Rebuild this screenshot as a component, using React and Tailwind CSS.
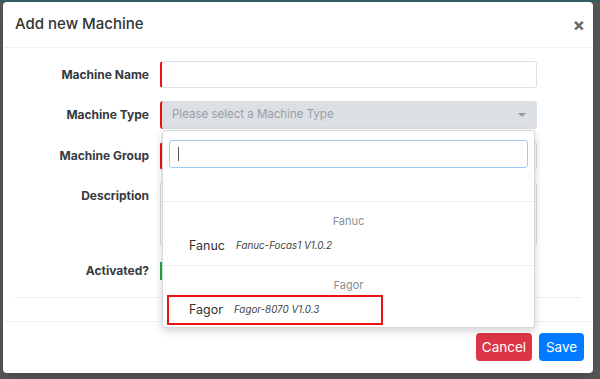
const labelCls =
  "w-[134px] shrink-0 text-right text-[12px] font-bold text-[#343a40] leading-none";

function Row({ label, children, className = "", labelTop = false }) {
  return (
    <div className={`flex ${labelTop ? "items-start" : "items-center"} ${className}`}>
      <div className={`${labelCls} ${labelTop ? "pt-[8px]" : ""}`}>{label}</div>
      <div className="ml-[11px] w-[377px] relative">{children}</div>
    </div>
  );
}

function Option({ name, version, selected = false }) {
  return (
    <div
      className={`mx-[4px] h-[30px] w-[216px] flex items-center pl-[20px] border-[2.5px] ${
        selected ? "border-[#ee1111]" : "border-transparent"
      }`}
    >
      <span className="text-[12.5px] text-[#333]">{name}</span>
      <span className="ml-[11px] text-[9.8px] italic text-[#444]">{version}</span>
    </div>
  );
}

export default function App() {
  return (
    <div
      className="w-[600px] h-[379px] bg-[#555555] overflow-hidden"
      style={{ fontFamily: "Inter, 'Liberation Sans', sans-serif" }}
    >
      <div className="h-[2px] bg-[#2f5d62]" />
      <div className="ml-[3px] w-[590px] h-[371px] bg-white rounded-[4px] flex flex-col shadow-lg">
        {/* header */}
        <div className="h-[46px] shrink-0 border-b border-[#eef0f2] flex items-center justify-between pl-[12px] pr-[8px]">
          <h1 className="text-[15px] font-medium text-[#333]">Add new Machine</h1>
          <span className="text-[18px] font-bold leading-none text-[#666]">×</span>
        </div>

        {/* body */}
        <div className="px-[12px] pt-[13px] h-[274px] shrink-0 border-b border-[#eef0f2]">
          <Row label="Machine Name" className="mb-[13px]">
            <div className="h-[27px] rounded-[3px] border border-[#dcdfe3] border-l-[2px] border-l-[#ee1111] bg-white" />
          </Row>

          <Row label="Machine Type" className="mb-[13px] relative z-10">
            <div className="h-[28px] rounded-[3px] border-l-[2px] border-l-[#ee1111] bg-[#dcdfe4] flex items-center justify-between pl-[10px] pr-[11px]">
              <span className="text-[11.5px] text-[#9aa0a6]">Please select a Machine Type</span>
              <span className="w-0 h-0 border-l-[4px] border-r-[4px] border-t-[4px] border-l-transparent border-r-transparent border-t-[#999]" />
            </div>

            {/* dropdown */}
            <div className="absolute left-[2px] top-[29px] w-[373px] bg-white border border-[#d5d8dc] rounded-[3px] shadow-[0_3px_8px_rgba(0,0,0,0.18)]">
              <div className="pt-[9px] px-[6px]">
                <div className="h-[28px] rounded-[3px] border border-[#9fcbf7] flex items-center pl-[8px]">
                  <span className="w-[1px] h-[14px] bg-[#555]" />
                </div>
              </div>
              <div className="h-[33px]" />
              <div className="border-t border-[#eceef0]">
                <div className="h-[29px] pt-[12px] leading-[14px] text-center text-[11px] text-[#8a8f95]">
                  Fanuc
                </div>
                <Option name="Fanuc" version="Fanuc-Focas1 V1.0.2" />
                <div className="h-[4px]" />
              </div>
              <div className="border-t border-[#eceef0]">
                <div className="h-[29px] pt-[12px] leading-[14px] text-center text-[11px] text-[#8a8f95]">
                  Fagor
                </div>
                <Option name="Fagor" version="Fagor-8070 V1.0.3" selected />
                <div className="h-[2px]" />
              </div>
            </div>
          </Row>

          <Row label="Machine Group" className="mb-[12px]">
            <div className="h-[28px] rounded-[3px] border border-[#dcdfe3] border-l-[2px] border-l-[#ee1111] bg-white" />
          </Row>

          <Row label="Description" labelTop className="mb-[16px]">
            <div className="h-[64px] rounded-[3px] border border-[#dcdfe3] bg-white" />
          </Row>

          <Row label="Activated?">
            <div className="h-[18px] w-[2px] bg-[#28a745]" />
          </Row>

          <div className="mt-[17px] border-t border-[#eceef0]" />
        </div>

        {/* footer */}
        <div className="flex justify-end gap-[7px] pt-[11px] pr-[9px]">
          <button className="h-[28px] w-[56px] rounded-[4px] bg-[#dc3545] text-white text-[13.5px]">
            Cancel
          </button>
          <button className="h-[28px] w-[45px] rounded-[4px] bg-[#007bff] text-white text-[13.5px]">
            Save
          </button>
        </div>
      </div>
    </div>
  );
}
